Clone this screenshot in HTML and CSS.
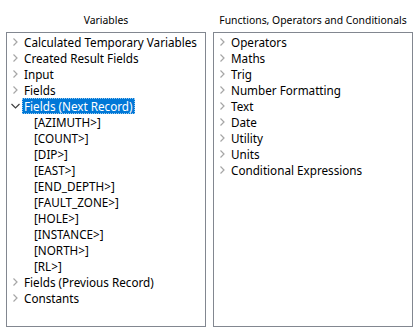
FILE: index.html
```html
<!DOCTYPE html>
<html lang="en">
<head>
    <meta charset="UTF-8">
    <title>Expression Builder</title>
    <link rel="stylesheet" href="styles.css">
</head>
<body>
    <div class="panels">
        <div class="panel">
            <div class="panel-title">Variables</div>
            <ul class="tree">
                <li class="node"><span class="arrow"><svg width="8" height="8" viewBox="0 0 8 8"><path d="M2.5 0.5 L6 4 L2.5 7.5" /></svg></span><span class="label">Calculated Temporary Variables</span></li>
                <li class="node"><span class="arrow"><svg width="8" height="8" viewBox="0 0 8 8"><path d="M2.5 0.5 L6 4 L2.5 7.5" /></svg></span><span class="label">Created Result Fields</span></li>
                <li class="node"><span class="arrow"><svg width="8" height="8" viewBox="0 0 8 8"><path d="M2.5 0.5 L6 4 L2.5 7.5" /></svg></span><span class="label">Input</span></li>
                <li class="node"><span class="arrow"><svg width="8" height="8" viewBox="0 0 8 8"><path d="M2.5 0.5 L6 4 L2.5 7.5" /></svg></span><span class="label">Fields</span></li>
                <li class="node open"><span class="arrow"><svg width="9" height="8" viewBox="0 0 9 8"><path d="M0.5 2 L4.5 6 L8.5 2" /></svg></span><span class="label selected">Fields (Next Record)</span></li>
                <li class="leaf">[AZIMUTH&gt;]</li>
                <li class="leaf">[COUNT&gt;]</li>
                <li class="leaf">[DIP&gt;]</li>
                <li class="leaf">[EAST&gt;]</li>
                <li class="leaf">[END_DEPTH&gt;]</li>
                <li class="leaf">[FAULT_ZONE&gt;]</li>
                <li class="leaf">[HOLE&gt;]</li>
                <li class="leaf">[INSTANCE&gt;]</li>
                <li class="leaf">[NORTH&gt;]</li>
                <li class="leaf">[RL&gt;]</li>
                <li class="node"><span class="arrow"><svg width="8" height="8" viewBox="0 0 8 8"><path d="M2.5 0.5 L6 4 L2.5 7.5" /></svg></span><span class="label">Fields (Previous Record)</span></li>
                <li class="node"><span class="arrow"><svg width="8" height="8" viewBox="0 0 8 8"><path d="M2.5 0.5 L6 4 L2.5 7.5" /></svg></span><span class="label">Constants</span></li>
            </ul>
        </div>
        <div class="panel">
            <div class="panel-title">Functions, Operators and Conditionals</div>
            <ul class="tree">
                <li class="node"><span class="arrow"><svg width="8" height="8" viewBox="0 0 8 8"><path d="M2.5 0.5 L6 4 L2.5 7.5" /></svg></span><span class="label">Operators</span></li>
                <li class="node"><span class="arrow"><svg width="8" height="8" viewBox="0 0 8 8"><path d="M2.5 0.5 L6 4 L2.5 7.5" /></svg></span><span class="label">Maths</span></li>
                <li class="node"><span class="arrow"><svg width="8" height="8" viewBox="0 0 8 8"><path d="M2.5 0.5 L6 4 L2.5 7.5" /></svg></span><span class="label">Trig</span></li>
                <li class="node"><span class="arrow"><svg width="8" height="8" viewBox="0 0 8 8"><path d="M2.5 0.5 L6 4 L2.5 7.5" /></svg></span><span class="label">Number Formatting</span></li>
                <li class="node"><span class="arrow"><svg width="8" height="8" viewBox="0 0 8 8"><path d="M2.5 0.5 L6 4 L2.5 7.5" /></svg></span><span class="label">Text</span></li>
                <li class="node"><span class="arrow"><svg width="8" height="8" viewBox="0 0 8 8"><path d="M2.5 0.5 L6 4 L2.5 7.5" /></svg></span><span class="label">Date</span></li>
                <li class="node"><span class="arrow"><svg width="8" height="8" viewBox="0 0 8 8"><path d="M2.5 0.5 L6 4 L2.5 7.5" /></svg></span><span class="label">Utility</span></li>
                <li class="node"><span class="arrow"><svg width="8" height="8" viewBox="0 0 8 8"><path d="M2.5 0.5 L6 4 L2.5 7.5" /></svg></span><span class="label">Units</span></li>
                <li class="node"><span class="arrow"><svg width="8" height="8" viewBox="0 0 8 8"><path d="M2.5 0.5 L6 4 L2.5 7.5" /></svg></span><span class="label">Conditional Expressions</span></li>
            </ul>
        </div>
    </div>
</body>
</html>
```

FILE: styles.css
```css
body {
    margin: 0;
    padding: 0;
    background-color: #ffffff;
    font-family: "Noto Sans", "Open Sans", sans-serif;
    font-size: 11.7px;
    color: #000000;
}
.panels {
    display: flex;
    gap: 7px;
    padding: 12px 0 0 6px;
}
.panel {
    width: 200px;
}
.panel-title {
    text-align: center;
    font-size: 10.4px;
    height: 16px;
    line-height: 16px;
    margin-bottom: 4px;
    white-space: nowrap;
}
.tree {
    list-style: none;
    margin: 0;
    padding: 1px 0 0 0;
    border: 1px solid #828790;
    box-sizing: border-box;
    height: 295px;
}
.tree li {
    height: 16px;
    line-height: 16px;
    white-space: nowrap;
}
.node {
    display: flex;
    align-items: center;
}
.arrow {
    width: 15px;
    display: flex;
    justify-content: center;
    padding-left: 1px;
    box-sizing: border-box;
}
.arrow svg {
    fill: none;
    stroke: #a6a6a6;
    stroke-width: 1.2;
}
.open .arrow svg {
    stroke: #404040;
}
.label {
    padding: 0 1px;
    height: 16px;
    border: 1px dotted transparent;
    box-sizing: border-box;
    line-height: 14px;
}
.selected {
    background-color: #0078d7;
    color: #ffffff;
    border-color: #99c9ef;
}
.leaf {
    padding-left: 27px;
}
```
